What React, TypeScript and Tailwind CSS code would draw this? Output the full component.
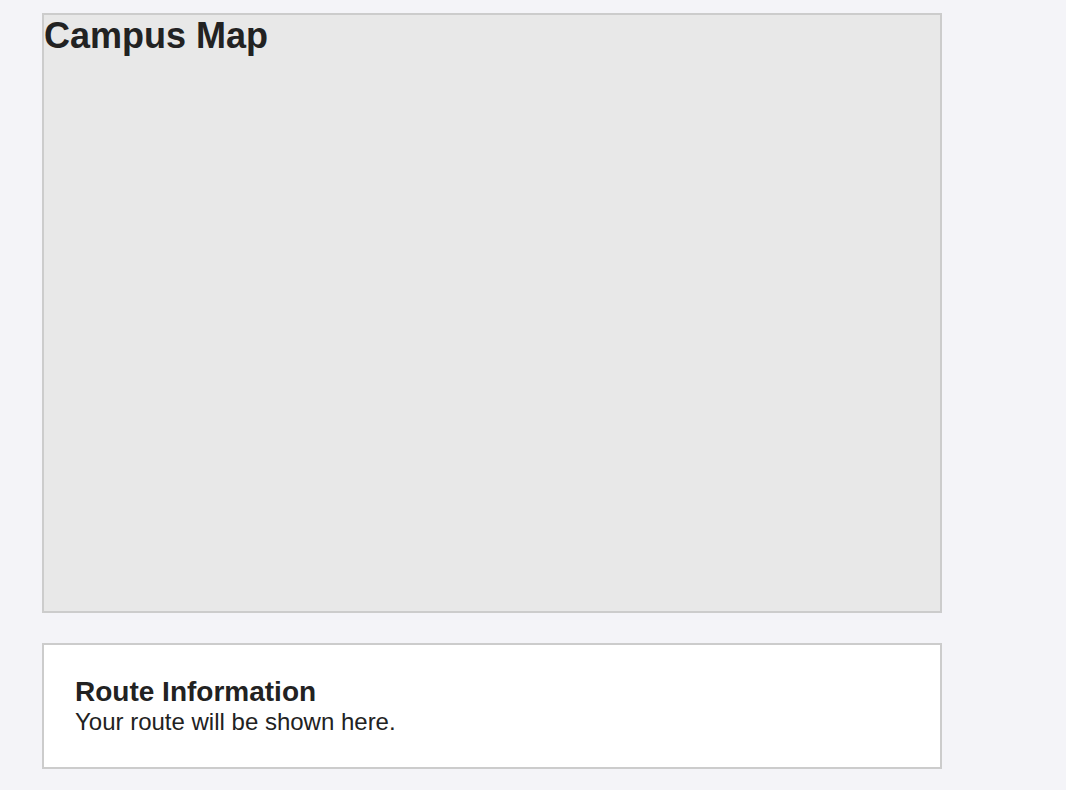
export default function App() {
  return (
    <div className="min-h-[790px] bg-[#f4f4f8] pl-[42px] pt-[13px] font-['Liberation_Sans',Arial,sans-serif] text-[#222]">
      <div className="h-[600px] w-[900px] border-2 border-[#cccccc] bg-[#e8e8e8]">
        <h1 className="text-[36px] font-bold leading-[1.15]">Campus Map</h1>
      </div>

      <div className="mt-[30px] w-[900px] border-2 border-[#cccccc] bg-white px-[31px] pt-[31px] pb-[31px]">
        <h2 className="text-[28px] font-bold leading-[1.15]">Route Information</h2>
        <p className="text-[24px] leading-[1.15]">Your route will be shown here.</p>
      </div>
    </div>
  );
}
